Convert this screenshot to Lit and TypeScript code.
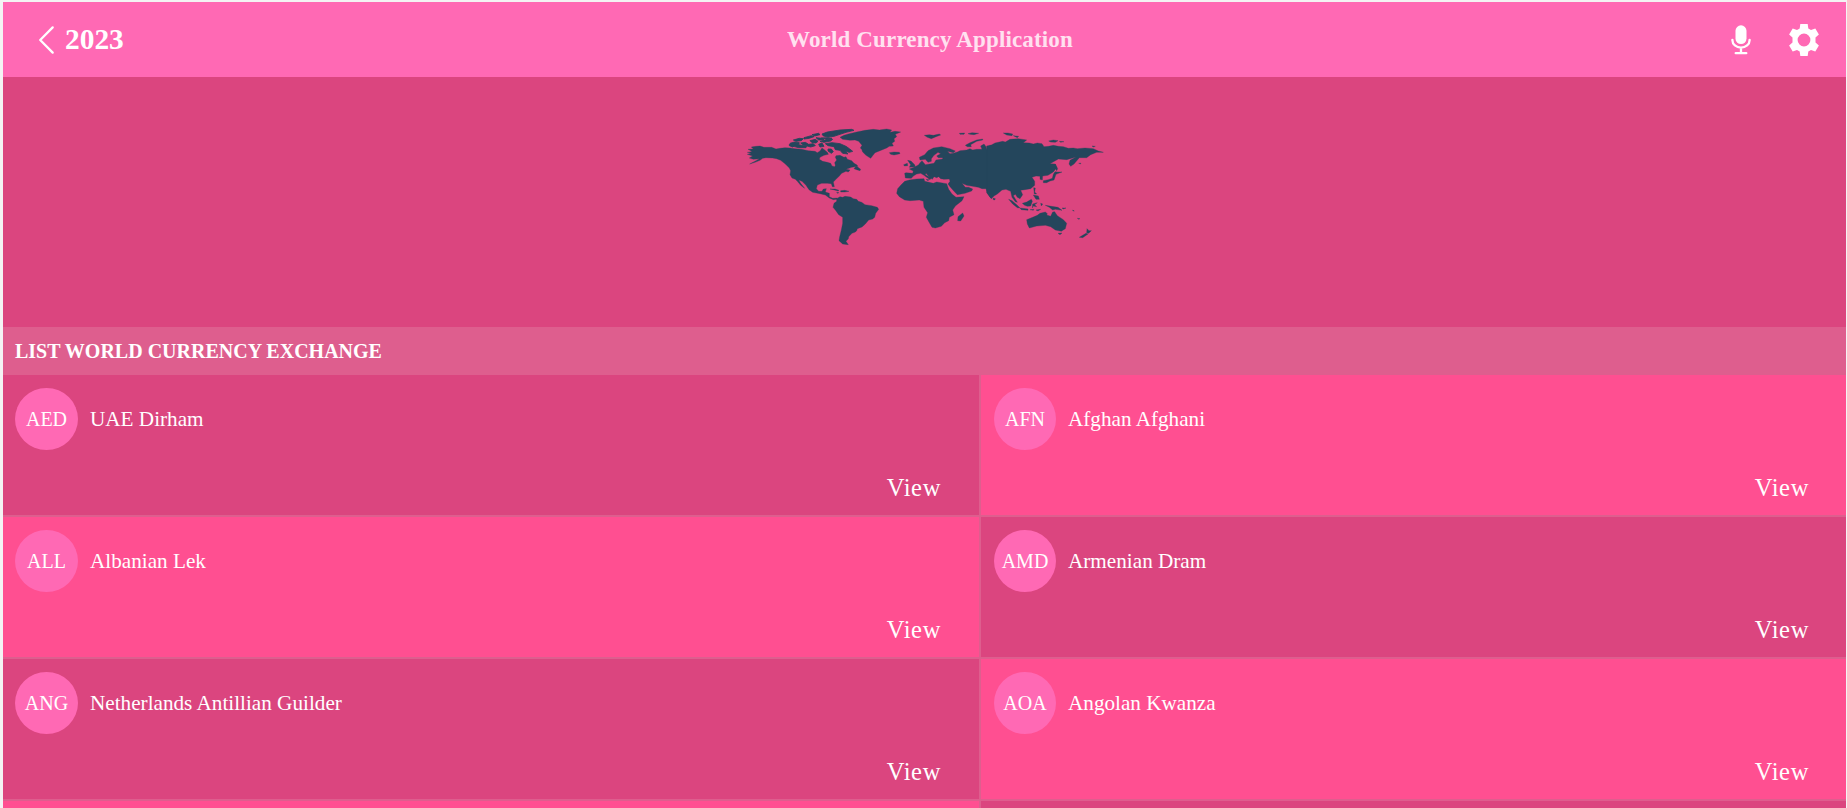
import { LitElement, html, css } from "lit";
import { customElement, property } from "lit/decorators.js";
import { classMap } from "lit/directives/class-map.js";

const currencies: [string, string][] = [
  ["AED", "UAE Dirham"],
  ["AFN", "Afghan Afghani"],
  ["ALL", "Albanian Lek"],
  ["AMD", "Armenian Dram"],
  ["ANG", "Netherlands Antillian Guilder"],
  ["AOA", "Angolan Kwanza"],
];

@customElement("world-map")
export class WorldMap extends LitElement {
  static styles = css`
    :host { display: block; width: 370px; height: 130px; }
    svg { display: block; fill: #24465c; stroke: #24465c; stroke-width: 1; }
    .islands { stroke-width: 2.5; }
  `;
  render() {
    return html`<svg width="370" height="130" viewBox="0 0 1110 390" aria-label="World map">
      <!-- Americas and Greenland -->
      <path d="M22 97L36 95 30 91 24 88 40 87 34 81 48 79 60 78 72 82 95 82 108 87 120 85 135 83 150 84 165 86 185 88 205 92 225 94 232 98 240 93 246 84 254 90 262 97 265 103 252 106 240 112 238 118 248 124 262 127 272 130 276 138 284 140 286 136 284 128 290 120 286 112 288 107 300 106 312 112 318 110 322 118 335 122 342 130 350 134 354 139 335 142 318 148 330 150 325 156 318 154 305 160 298 168 288 178 280 186 283 200 277 200 274 191 262 190 245 190 232 195 229 206 236 214 246 214 250 207 259 206 256 216 268 220 268 230 278 235 292 234 290 238 280 239 268 234 256 225 240 221 218 217 207 209 198 196 186 184 176 180 182 190 194 205 182 196 172 184 166 178 156 174 150 164 152 152 148 144 136 132 122 121 110 116 98 114 78 113 68 115 60 121 45 127 29 132 48 122 58 116 40 118 28 114 38 108 22 103 34 100Z"/>
      <path d="M342 146L348 139 354 142 362 148 360 152 350 149Z M270 207L285 207 297 211 294 213 280 209Z M302 212L314 211 327 214 314 216 302 216Z M290 217L297 218 292 220Z"/>
      <path d="M290 236L300 230 308 232 315 229 332 231 340 236 350 238 355 244 365 247 375 254 395 257 412 262 416 268 407 280 404 292 398 297 386 300 376 312 366 321 352 326 350 332 346 336 336 340 326 350 325 356 318 364 325 374 308 372 297 362 299 350 304 330 308 310 308 292 296 284 286 270 279 262 282 250 290 244Z"/>
      <path d="M300 52L312 46 325 42 350 36 375 31 400 28 418 30 440 27 455 30 450 37 465 34 482 36 466 43 470 50 462 56 464 64 456 70 460 78 448 79 440 84 420 92 405 98 399 106 392 115 378 106 368 96 365 88 361 84 366 76 356 64 345 60 330 61 308 58Z"/>
      <path d="M448 98L462 96 478 97 480 101 462 105 452 103Z"/>
      <!-- Arctic archipelago -->
      <path class="islands" d="M150 70L164 66 178 68 176 74 200 79 198 83 176 83 160 79 152 76Z M148 73L162 78 158 81 148 77Z M160 60L178 55 190 56 184 62 168 64Z M182 69L196 67 206 73 220 71 226 77 212 81 190 75Z M192 53L214 47 222 50 208 55 192 57Z M210 62L226 58 234 64 228 69 216 68Z M216 44L236 40 240 44 224 48Z M236 73L246 69 252 79 240 81Z M228 53L246 55 252 59 236 60Z M246 42L262 36 300 30 335 28 342 31 318 37 300 43 282 49 264 51 250 48Z M240 64L262 58 278 58 272 63 252 67Z M256 71L276 68 300 71 318 79 328 86 338 94 328 97 316 94 324 102 308 100 300 91 286 89 282 80 264 77Z M264 87L274 87 280 95 274 100 264 93Z M244 54L264 53 276 55 260 57Z"/>
      <!-- Europe, western Asia, Africa -->
      <g transform="translate(390 0)">
        <path d="M104 160L108 158 128 160 130 153 118 147 134 141 146 134 150 128 156 122 161 128 166 134 192 130 198 120 218 117 218 113 205 113 200 108 212 101 204 97 192 106 184 116 184 124 174 127 166 118 150 120 148 112 164 104 174 92 190 84 215 80 240 86 256 93 250 98 232 94 240 101 250 100 262 96 270 92 290 90 300 86 308 90 320 88 336 88 332 78 342 72 348 80 352 92 360 86 357 78 366 76 368 222 364 234 360 232 352 218 348 206 336 206 325 202 308 199 290 196 276 190 286 202 296 202 308 207 305 213 285 220 262 224 252 214 240 200 234 192 240 184 238 177 222 178 212 176 206 170 200 173 192 170 187 178 176 169 168 160 166 164 184 174 180 179 162 166 152 160 140 162 130 168 124 175 106 174Z"/>
        <path d="M118 180L140 177 162 176 164 184 190 190 200 186 230 191 236 208 246 222 258 232 282 230 276 242 256 258 248 270 252 284 238 292 236 302 224 308 214 319 196 324 186 322 178 308 169 292 173 278 162 262 160 244 148 240 120 242 104 240 88 230 80 220 83 206 92 196 104 184Z M264 290L278 279 282 288 272 303 263 302Z"/>
        <path d="M113 121L123 123 134 134 136 140 118 142 122 134Z M101 134L112 130 113 137 103 138Z M163 46L178 44 190 46 208 42 212 45 198 50 184 56 172 52Z M286 76L300 68 320 60 338 57 338 60 320 64 302 74 304 80 292 80Z M268 40L284 39 282 43 270 43Z M294 41L306 38 326 40 312 44 300 43Z M168 178L177 179 174 182Z M369 234L376 236 374 240 370 239Z"/>
      </g>
      <!-- Eastern Asia and Oceania -->
      <g transform="translate(750 0)">
        <path d="M-10 78L4 75 15 69 38 64 46 66 60 58 85 56 110 60 100 68 118 69 130 72 142 69 156 71 162 80 176 79 190 76 205 79 220 80 235 85 250 84 262 86 285 84 310 86 325 93 340 97 320 97 302 104 290 113 268 113 252 132 242 139 237 132 240 121 258 111 230 119 205 117 180 131 196 132 200 143 190 156 174 166 158 168 157 180 150 178 150 169 138 168 126 172 134 184 134 196 122 206 104 209 92 211 98 224 90 236 82 232 76 223 70 227 82 247 76 245 66 232 62 214 48 208 36 210 22 222 12 228 4 236 -10 218Z"/>
        <path d="M160 182L175 179 187 175 190 163 195 155 203 156 216 156 206 160 198 163 192 180 180 183 170 188 160 188Z M196 132L203 146 200 152 195 144Z M40 39L54 39 68 42 66 47 50 45Z M70 47L86 49 82 53Z M176 63L190 60 204 62 196 67 182 66Z M208 64L222 65 212 67Z M306 78L316 79 310 81Z M266 130L272 129 272 132Z"/>
        <path d="M56 238L66 242 82 256 90 264 82 263 68 252Z M90 264L114 267 114 271 94 269Z M97 250L110 246 124 238 127 244 122 258 112 259 104 256Z M128 252L142 248 134 254 140 260 130 258 127 264Z M131 203L136 204 134 216 140 222 133 222Z M130 225L145 228 148 238 138 238Z M120 269L132 268 130 271Z M138 270L152 268 144 273Z M152 250L158 252 154 258Z M166 256L184 259 204 262 216 271 196 268 188 270 178 262Z M216 264L228 264 220 267Z M248 270L253 273 249 273Z M262 295L270 296 266 298Z"/>
        <path d="M110 299L128 292 142 286 150 280 166 276 172 281 170 285 182 289 188 276 194 275 202 287 220 299 230 310 226 326 214 334 196 330 182 320 166 316 140 318 118 324 112 312Z M204 340L216 339 210 344Z M268 352L288 340 294 342 278 353Z M291 326L297 332 304 332 296 340 290 338Z"/>
      </g>
    </svg>`;
  }
}

@customElement("currency-card")
export class CurrencyCard extends LitElement {
  @property() code = "";
  @property() name = "";
  static styles = css`
    :host { display: flex; flex-direction: column; justify-content: space-between; height: 140px; box-sizing: border-box; padding: 13px 38px 13px 12px; }
    :host(:nth-child(even)) { padding-left: 13px; padding-right: 37px; }
    .head { display: flex; align-items: center; gap: 12px; font-size: 21.2px; }
    .badge { display: flex; align-items: center; justify-content: center; width: 63px; height: 62px; border-radius: 50%; background: #ff69b4; font-size: 20px; }
    :host(:nth-child(even)) .badge { width: 62px; }
    .view { align-self: flex-end; font-size: 24.6px; line-height: 28px; letter-spacing: 0.6px; }
  `;
  render() {
    return html`<div class="head"><span class="badge">${this.code}</span><span>${this.name}</span></div>
      <span class="view">View</span>`;
  }
}

@customElement("app-root")
export class AppRoot extends LitElement {
  static styles = css`
    :host { display: block; box-sizing: border-box; height: 808px; overflow: hidden; padding: 2px 1px 0 3px; background: #f4f3f4; color: #fff; font-family: "Liberation Serif", "Times New Roman", serif; }
    .header { display: grid; grid-template-columns: 1fr auto 1fr; align-items: center; height: 75px; background: #ff69b4; }
    .back { display: flex; align-items: center; gap: 10px; padding-left: 35px; font-size: 29.4px; font-weight: 700; }
    .title { margin: 0; padding-left: 11px; font-size: 23px; letter-spacing: 0.15px; opacity: 0.8; }
    .tools { display: flex; justify-content: flex-end; align-items: center; gap: 37px; padding-right: 26px; }
    svg { display: block; }
    .hero { display: flex; justify-content: center; box-sizing: border-box; height: 250px; padding-top: 43px; background: #db457f; }
    .section { display: flex; align-items: center; box-sizing: border-box; height: 48px; margin: 0; padding-left: 12px; background: #de5e8e; font-size: 20px; }
    .list { display: grid; grid-template-columns: 976px 1fr; gap: 2px; background: #de5e8e; }
    .dark { background: #db457f; }
    .light { background: #ff4f91; }
    .next { height: 7px; }
  `;
  render() {
    return html`
      <header class="header">
        <div class="back">
          <svg width="17" height="30" viewBox="0 0 17 30" fill="none" stroke="#fff" stroke-width="2.3" stroke-linecap="round" stroke-linejoin="round"><path d="M14.700 2.400L2.200 15 14.700 27.600"/></svg>
          <span>2023</span>
        </div>
        <h1 class="title">World Currency Application</h1>
        <div class="tools">
          <svg width="20" height="30" viewBox="0 0 20 30" fill="none" stroke="#fff" stroke-width="2.300" stroke-linecap="round"><rect x="4.500" y="0.300" width="11" height="18.700" rx="5.500" fill="#fff" stroke="none"/><path d="M1.400 14.800v.5a8.600 7.300 0 0 0 17.200 0v-.5M10 23v5M4.700 28.200h10.600"/></svg>
          <svg width="32" height="32" viewBox="0 0 32 32" fill="#fff"><path fill-rule="evenodd" d="M12.300 0h7.400l.6 4.400 2.700 1.500 4.300-1.400 3.600 6-3.400 3v5l3.400 3-3.600 6-4.300-1.400-2.700 1.500-.6 4.400h-7.400l-.6-4.400L9 26.100 4.700 27.500l-3.600-6 3.400-3v-5l-3.400-3 3.600-6L9 5.900l2.700-1.500zM16 9.600a6.400 6.400 0 1 0 0 12.800 6.400 6.400 0 0 0 0-12.800z"/></svg>
        </div>
      </header>
      <section class="hero"><world-map></world-map></section>
      <h2 class="section">LIST WORLD CURRENCY EXCHANGE</h2>
      <main class="list">
        ${currencies.map(([code, name], i) => {
          const dark = i % 4 === 0 || i % 4 === 3;
          return html`<currency-card class=${classMap({ dark, light: !dark })} .code=${code} .name=${name}></currency-card>`;
        })}
        <div class="next light"></div>
        <div class="next dark"></div>
      </main>`;
  }
}
